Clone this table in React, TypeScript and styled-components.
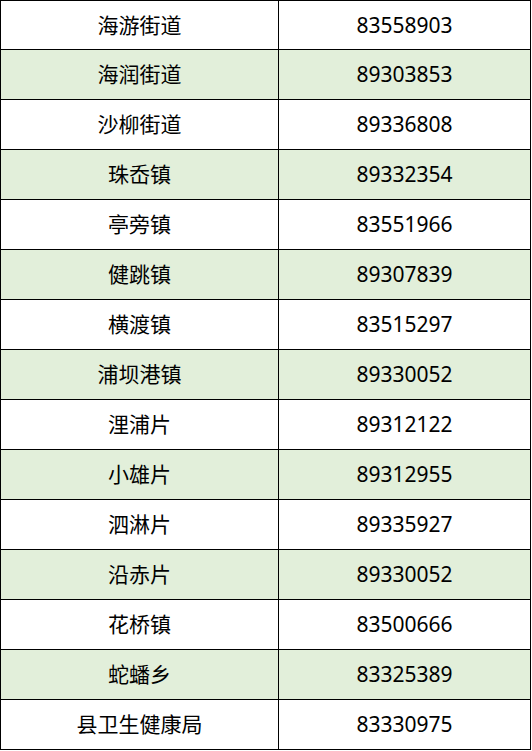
import React from "react";
import styled, { createGlobalStyle } from "styled-components";

const GlobalStyle = createGlobalStyle`
  html, body {
    margin: 0;
    padding: 0;
    background: #ffffff;
  }
  body {
    font-family: "Noto Sans", "Noto Sans CJK SC", sans-serif;
    color: #000000;
  }
`;

const Table = styled.div`
  width: 531px;
  display: grid;
  grid-template-columns: 278px 252px;
  grid-template-rows: 49px;
  grid-auto-rows: 50px;
  border-top: 1px solid #000;
  border-left: 1px solid #000;
  box-sizing: border-box;
`;

const Cell = styled.div<{ $shaded: boolean }>`
  display: flex;
  align-items: center;
  justify-content: center;
  box-sizing: border-box;
  border-right: 1px solid #000;
  border-bottom: 1px solid #000;
  background-color: ${(p) => (p.$shaded ? "#e2efda" : "#ffffff")};
  font-size: 21px;
  line-height: 1;
  white-space: nowrap;
`;

const rows: [string, string][] = [
  ["海游街道", "83558903"],
  ["海润街道", "89303853"],
  ["沙柳街道", "89336808"],
  ["珠岙镇", "89332354"],
  ["亭旁镇", "83551966"],
  ["健跳镇", "89307839"],
  ["横渡镇", "83515297"],
  ["浦坝港镇", "89330052"],
  ["浬浦片", "89312122"],
  ["小雄片", "89312955"],
  ["泗淋片", "89335927"],
  ["沿赤片", "89330052"],
  ["花桥镇", "83500666"],
  ["蛇蟠乡", "83325389"],
  ["县卫生健康局", "83330975"],
];

export default function App() {
  return (
    <>
      <GlobalStyle />
      <Table>
        {rows.map(([name, phone], i) => (
          <React.Fragment key={name + i}>
            <Cell $shaded={i % 2 === 1}>{name}</Cell>
            <Cell $shaded={i % 2 === 1}>{phone}</Cell>
          </React.Fragment>
        ))}
      </Table>
    </>
  );
}
